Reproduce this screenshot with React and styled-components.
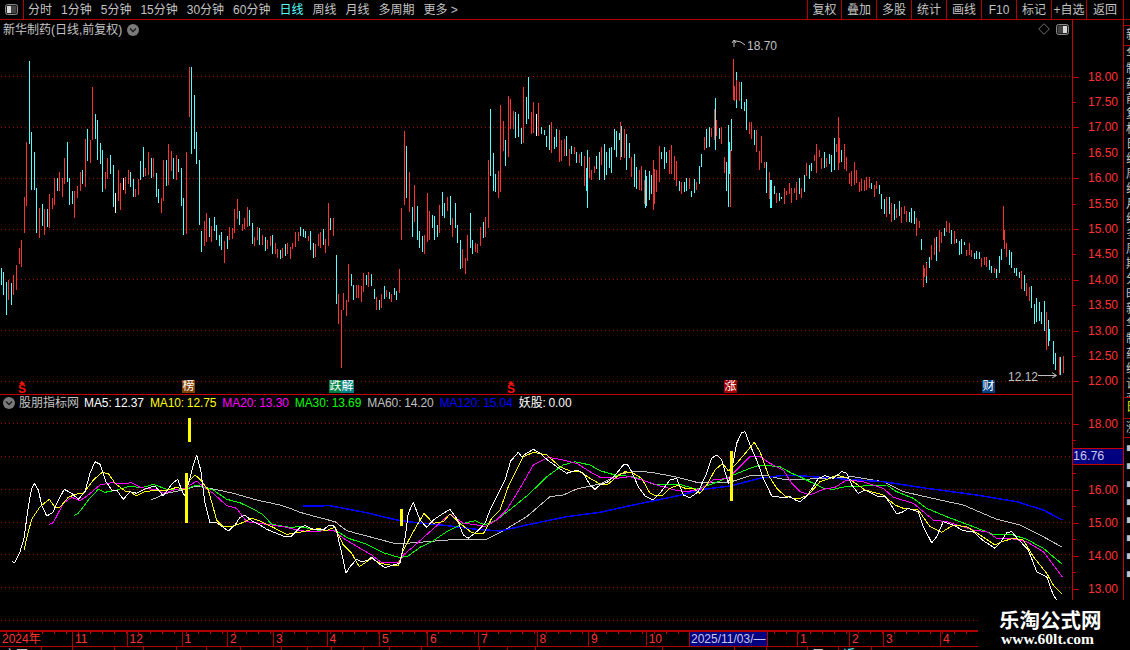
import React from "react";
import styled, { createGlobalStyle } from "styled-components";

const RED = "#b00000";
const TXT = "#c4c4c4";
const AXIS = "#ff3232";
const FONT = `"Liberation Sans", "Noto Sans CJK SC", sans-serif`;

const Global = createGlobalStyle`
  html, body { margin: 0; padding: 0; background: #000; }
  * { box-sizing: border-box; }
`;

const Page = styled.div`
  position: relative; width: 1130px; height: 650px; overflow: hidden;
  background: #000; color: ${TXT}; font: 12px/16px ${FONT};
  display: flex; flex-direction: column;
`;
const Toolbar = styled.header`
  display: flex; height: 20px; flex: none; border-bottom: 1px solid ${RED}; padding-right: 6px;
`;
const PanelBtn = styled.div`
  width: 24px; display: flex; align-items: center; justify-content: center;
  border-right: 1px solid ${RED}; padding-bottom: 1px;
`;
const Tabs = styled.nav`
  flex: 1; display: flex; align-items: center; padding-left: 4px; gap: 9px;
`;
const Tab = styled.span`
  color: ${p => (p.$on ? "#54ffff" : TXT)}; white-space: nowrap;
`;
const ToolBtn = styled.span`
  width: ${p => p.$w}px; display: flex; align-items: center; justify-content: center;
  border-left: 1px solid ${RED}; white-space: nowrap;
  &:last-child { border-right: 1px solid ${RED}; }
`;
const Body = styled.div`
  flex: 1; display: flex; min-height: 0;
`;
const Charts = styled.div`
  width: 1072px; flex: none; display: flex; flex-direction: column;
`;
const Upper = styled.section`
  position: relative; height: 375px; flex: none; border-bottom: 1px solid #c80000;
`;
const Lower = styled.section`
  position: relative; height: 235px; flex: none;
`;
const Plot = styled.svg`
  display: block; position: absolute; inset: 0; font-family: ${FONT};
`;
const Title = styled.div`
  position: absolute; left: 3px; top: 2px; display: flex; align-items: center; gap: 5px; white-space: nowrap;
`;
const Corner = styled.div`
  position: absolute; right: 3px; top: 3px; display: flex; align-items: center; gap: 6px;
`;
const Marker = styled.span`
  position: absolute; left: ${p => p.$x}px; top: 360px; width: ${p => p.$w || 13}px; height: 13px;
  background: ${p => p.$bg}; color: #fff; font-size: 12px; line-height: 13px; text-align: center;
  overflow: hidden;
`;
const Dollar = styled.span`
  position: absolute; left: ${p => p.$x}px; top: 361px; width: 8px; height: 13px; color: #ff1010;
  font: bold 12px/17px ${FONT}; text-align: center;
  &::before { content: ""; position: absolute; left: 1px; top: 0; border: 3px solid transparent;
    border-top: 0; border-bottom: 3px solid #ff1010; }
`;
const Legend = styled.div`
  position: absolute; left: 3px; top: 0; height: 16px; display: flex; align-items: center; white-space: nowrap;
  z-index: 1;
`;
const LegendName = styled.span`
  margin: 0 5px 0 4px; color: ${TXT};
`;
const LegendItem = styled.span`
  color: ${p => p.$c}; margin-right: 6px; letter-spacing: -0.1px; word-spacing: -0.5px;
`;
const TimeAxis = styled.div`
  height: 17px; flex: none; display: flex; color: ${AXIS}; border-top: 2px solid ${RED};
  border-bottom: 1px solid ${RED};
  background: repeating-linear-gradient(90deg, ${RED} 0 1px, transparent 1px 12px) 6px 0 / 100% 2px no-repeat;
`;
const Month = styled.span`
  width: ${p => p.$w}px; flex: none; padding-left: 2px; line-height: 15px; white-space: nowrap;
  border-right: 1px solid ${RED}; overflow: hidden;
`;
const DateBox = styled.span`
  width: ${p => p.$w}px; flex: none; background: #000080; color: #c8c8e8; padding-left: 1px; line-height: 15px;
  white-space: nowrap; border-right: 1px solid ${RED}; overflow: hidden;
`;
const StatusBar = styled.div`
  flex: 1; display: flex; min-height: 0; overflow: hidden;
`;
const StatusCell = styled.span`
  width: ${p => p.$w}px; flex: none; border-right: 1px solid ${RED}; padding: 1px 0 0 4px; font-size: 12px;
  line-height: 14px; color: ${p => p.$c || "#ddd"}; white-space: nowrap; overflow: hidden;
`;
const AxisCol = styled.aside`
  position: relative; width: 52px; flex: none; display: flex; flex-direction: column;
  border-left: 1px solid #c80000; border-right: 1px solid #c80000; color: ${AXIS};
`;
const AxisPane = styled.div`
  height: ${p => p.$h}px; flex: none; padding-top: ${p => p.$pad}px;
  border-bottom: ${p => (p.$line ? "1px solid #c80000" : "none")};
`;
const AxisRow = styled.div`
  position: relative; height: ${p => p.$h}px; display: flex; align-items: center; justify-content: flex-end;
  padding-right: 5px;
  &::before { content: ""; position: absolute; left: 0; top: 50%; height: 1px;
    width: ${p => (p.$major ? 6 : 3)}px; background: ${RED}; }
`;
const ValueTag = styled.div`
  position: absolute; left: 0; right: 0; top: 428px; height: 17px; background: #000080; color: #c8c8e8;
  border-top: 1px solid #c80000; border-bottom: 1px solid #c80000; padding-left: 0; line-height: 15px;
  font-size: 12.5px;
`;
const Strip = styled.aside`
  flex: 1; display: flex; flex-direction: column; min-width: 0; overflow: hidden;
`;
const StripRow = styled.div`
  height: ${p => p.$h}px; flex: none; overflow: hidden; padding: 1px 0 0 2px; color: ${p => p.$c || TXT};
  border-bottom: ${p => (p.$line ? `1px solid ${RED}` : "none")};
`;
const StripText = styled.div`
  width: 12px; word-break: break-all; line-height: ${p => p.$lh || 16}px;
`;
const Watermark = styled.div`
  position: absolute; left: 978px; top: 600px; width: 152px; height: 50px; background: #000; z-index: 3;
  display: flex; flex-direction: column; align-items: flex-start; padding: 7px 0 0 21px;
  color: #fff; font-weight: bold; white-space: nowrap;
`;
const MarkName = styled.div`
  font: bold 20.5px/24px "Noto Sans CJK SC", sans-serif;
`;
const MarkUrl = styled.div`
  font: bold 15.5px/16px "Liberation Serif", serif; margin: 0 0 0 2px;
`;

/* hand-read candles: x, top, bottom, colour */
const r = "#ff3232", c = "#54ffff", w = "#ffffff";
const HAND = [
  [1,268,285,c],[3,272,295,c],[6,282,315,c],[8,280,300,r],[11,283,305,c],[13,275,295,r],[16,265,290,r],[19,248,264,r],[21,240,267,r],
  [24,197,233,r],[26,142,206,r],[29,61,144,c],[31,132,190,c],[34,152,190,c],[36,188,233,c],[39,208,238,r],[42,204,226,c],[44,209,235,r],[47,209,227,c],[49,194,228,r],
  [52,198,209,r],[54,178,205,r],[57,178,191,c],[59,172,191,r],[62,178,197,r],[64,158,184,r],[67,142,182,c],[69,178,205,c],[72,191,204,c],[74,191,218,r],
  [77,186,198,r],[80,172,191,r],[82,170,184,c],[85,139,187,r],[87,129,161,c],[90,140,163,r],[92,87,140,r],[95,114,139,c],[97,120,160,c],[100,143,164,c],
  [102,150,192,c],[105,172,189,r],[107,158,179,r],[110,155,174,c],[113,165,207,c],[115,193,213,w],[118,170,201,r],[120,183,210,r],[123,178,190,w],[125,177,194,r],
  [128,170,184,r],[130,172,187,c],[133,179,197,c],[135,189,197,r],[138,179,195,r],[140,161,180,c],[143,147,177,c],[145,168,176,r],[148,152,175,r],[151,158,178,c],
  [153,158,177,r],[156,173,197,c],[158,189,203,c],[161,198,213,r],[163,160,201,r],[166,160,186,c],[168,144,185,r],[171,151,171,r],[173,158,179,c],[176,155,180,r],
  [178,159,172,c],[181,168,206,c],[183,198,235,c],[186,152,234,r],[189,67,117,r],[191,67,154,c],[194,95,149,c],[196,132,164,c],[199,160,225,c],[201,231,252,c],
  [204,221,246,r],[206,213,242,r],[209,218,237,c],[211,226,242,r],[214,217,231,c],[216,225,240,c],[219,235,246,c],[221,232,250,c],[224,241,263,r],[227,236,249,c],
  [229,227,240,r],[232,228,239,r],[234,209,233,r],[237,199,219,r],[239,211,225,c],[242,224,231,r],[244,218,229,r],[247,207,227,r],[249,210,226,c],[252,223,244,c],
  [254,237,246,r],[257,227,240,r],[259,228,245,c],[262,235,245,r],[265,237,251,c],[267,240,249,r],[270,236,246,r],[272,235,254,c],[275,243,254,r],[277,249,258,r],
  [280,250,259,c],[282,248,258,r],[285,244,256,c],[287,243,254,r],[290,247,259,r],[292,243,249,r],[295,232,247,r],[298,232,241,r],[300,227,236,c],[303,229,237,c],
  [305,231,238,c],[308,236,241,r],[310,231,250,c],[313,243,258,c],[315,244,257,r],[318,234,246,r],[320,232,248,r],[323,229,245,c],[325,239,253,r],[328,203,246,r],
  [330,218,230,c],[333,218,236,r],[336,255,304,c],[338,294,324,r],[341,310,368,r],[343,293,310,r],[346,300,316,r],[348,264,302,r],[351,274,286,c],[353,285,300,c],
  [356,285,298,r],[358,285,298,r],[361,286,302,r],[363,273,292,r],[366,275,285,c],[368,272,287,r],[371,274,286,c],[374,289,299,c],[376,297,310,r],[379,300,310,c],
  [381,294,308,r],[384,286,299,c],[386,290,297,r],[389,292,299,c],[391,294,302,r],[394,288,295,c],[396,291,300,c],[399,269,293,r],[401,208,240,r],[404,131,205,r],
  [406,146,198,c],[409,172,212,r],[412,207,237,c],[414,185,222,r],[417,206,240,c],[419,231,248,c],[422,236,252,c],[424,235,254,r],[427,193,242,r],[429,211,240,r],
  [432,215,228,c],[434,216,240,c],[437,225,237,c],[439,205,233,r],[442,192,216,c],[444,203,218,c],[447,197,211,r],[450,196,225,c],[452,218,237,r],[455,203,228,c],
  [457,225,243,c],[460,240,269,c],[462,249,268,r],[465,258,274,r],[467,235,261,r],[470,213,248,c],[472,240,254,c],[475,243,252,r],[477,244,253,r],[480,227,246,r],
  [483,222,238,c],[485,217,237,r],[488,160,228,r],[490,109,176,c],[493,153,191,c],[495,174,192,c],[498,171,198,r],[500,105,192,r],[503,121,151,r],[505,140,166,c],
  [508,96,157,r],[510,99,129,r],[513,111,129,r],[515,112,138,c],[518,114,137,c],[521,128,144,c],[523,87,143,r],[526,97,124,c],[528,77,119,c],[531,112,134,r],
  [533,102,133,r],[536,114,136,w],[538,103,136,r],
  /* spikes in the later stretch */
  [587,150,208,c],[620,122,160,r],[645,170,208,c],[653,160,210,r],[715,98,150,c],[728,125,207,c],[730,150,207,r],[733,59,100,r],[736,72,108,c],
  [770,180,208,c],[838,117,170,r],[923,265,287,r],[926,262,283,c],[1003,206,240,r],[1048,320,346,c],[1053,341,364,c],[1055,353,370,c],[1059,357,375,r],[1060,357,375,c],[1063,356,373,r],
];
/* envelope of the later candles */
const ENV = [
  [540,115,145],[550,125,160],[560,130,165],[570,140,165],[580,145,170],[587,160,200],[595,145,180],[605,140,185],[618,122,158],
  [627,130,172],[635,160,195],[645,172,208],[652,165,208],[660,140,178],[670,135,172],[680,178,200],[690,180,200],[698,172,195],
  [705,122,155],[715,98,155],[722,125,170],[725,150,205],[729,125,208],[733,75,105],[738,75,108],[745,92,130],[752,115,150],[760,135,175],[768,165,207],
  [775,183,205],[785,184,200],[795,185,207],[805,170,190],[815,132,172],[825,155,172],[838,130,170],[850,160,190],[860,172,190],[875,180,195],
  [885,195,225],[900,204,220],[910,205,225],[920,215,240],[924,262,287],[930,248,270],[937,225,262],[945,215,240],[955,222,250],
  [965,238,255],[975,250,265],[985,256,270],[993,265,283],[1000,255,276],[1003,225,245],[1008,240,265],[1015,260,280],[1025,275,295],
  [1032,285,322],[1040,298,325],[1045,300,345],[1050,330,355],
];
const lerp = (x, i) => {
  for (let k = 1; k < ENV.length; k++) {
    if (x <= ENV[k][0]) {
      const a = ENV[k - 1], b = ENV[k], t = (x - a[0]) / (b[0] - a[0]);
      return a[i] + (b[i] - a[i]) * t;
    }
  }
  return ENV[ENV.length - 1][i];
};
const buildTail = () => {
  const out = [];
  let seed = 7;
  const rnd = () => ((seed = (seed * 1103 + 12345) % 65536) / 65536);
  for (let x = 541; x < 1051; x += 2.5) {
    const top = lerp(x, 1), bot = lerp(x, 2), h = bot - top;
    const shift = (rnd() - 0.5) * 10;
    const a = top + rnd() * h * 0.45 + shift;
    const b = bot - rnd() * h * 0.45 + shift;
    const down = x > 1008 && x < 1050;
    out.push([Math.round(x), Math.round(a), Math.round(b), rnd() < (down ? 0.15 : 0.5) ? r : c]);
  }
  return out;
};
const CANDLES = [...HAND, ...buildTail()];

const Z = (chunks) => chunks.flatMap(([x0, pts]) => pts.map(([x, y]) => `${(x0 + x / 3).toFixed(1)},${(410 + y / 3).toFixed(1)}`)).join(" ");

const MA5 = Z([
  [0,[[35,455],[45,457],[60,425],[72,385],[85,290],[95,235],[103,220],[115,240],[125,285],[140,318],[158,308],[175,270],[193,238],[215,250],[235,268],[255,245],[270,190],[285,155],[300,163],[318,215],[335,240],[350,240],[370,268],[390,245],[410,250],[440,235],[465,228],[490,258],[515,222],[533,208],[545,240],[553,258],[570,205],[580,165],[590,135],[602,180],[615,280],[630,338],[650,338],[685,363],[705,345],[720,322],[735,316],[755,332],[780,345],[800,358],[825,368],[850,378],[875,378]]],
  [300,[[0,352],[15,347],[40,358],[70,360],[85,347],[100,345],[110,365],[125,430],[138,490],[150,470],[170,448],[185,455],[200,452],[215,442],[235,460],[255,473],[280,465],[300,460],[315,385],[325,310],[340,277],[360,330],[380,352],[400,330],[430,310],[450,298],[470,325],[490,375],[505,385],[530,365],[555,340],[570,300],[590,260],[615,210],[632,153],[655,127],[665,140],[680,130],[700,118],[720,130],[740,148],[770,170],[800,190],[830,180],[850,190],[870,225],[885,238]]],
  [600,[[0,225],[25,215],[50,190],[70,165],[82,163],[95,185],[115,230],[135,258],[160,270],[180,250],[210,210],[230,205],[250,255],[270,263],[295,245],[320,190],[335,145],[350,135],[365,150],[385,220],[395,180],[410,100],[425,68],[435,65],[450,105],[470,150],[490,205],[515,258],[550,263],[570,260],[590,272]]],
  [800,[[0,275],[20,258],[40,230],[55,205],[75,197],[100,205],[125,185],[140,190],[155,225],[175,250],[195,240],[230,258],[255,258],[270,280],[290,312],[310,305],[325,295],[355,305],[370,350],[395,398],[410,380],[430,335],[460,345],[490,362],[520,365],[550,392],[585,415],[600,400],[620,368],[635,365],[655,388],[685,420],[710,485],[740,500],[760,555],[770,570]]],
]);
const MA10 = Z([
  [0,[[72,420],[85,365],[95,328],[120,290],[148,268],[165,292],[180,292],[205,262],[230,252],[250,250],[280,210],[305,188],[325,190],[345,220],[375,243],[390,243],[408,258],[435,245],[470,240],[495,243],[530,232],[555,240],[570,210],[585,195],[600,208],[625,240],[650,330],[670,350],[695,350],[735,335],[755,325],[785,335],[825,355],[860,373]]],
  [300,[[0,367],[30,360],[60,355],[75,363],[105,352],[130,405],[155,430],[178,470],[200,455],[215,445],[240,460],[270,465],[295,468],[310,420],[340,365],[372,310],[400,340],[430,335],[450,312],[480,340],[515,368],[550,372],[575,325],[600,300],[625,230],[650,178],[670,140],[700,127],[740,135],[780,170],[810,183],[840,185],[870,205]]],
  [600,[[0,222],[25,222],[50,200],[75,185],[100,190],[125,205],[150,250],[170,258],[190,255],[210,235],[235,225],[255,235],[280,235],[300,250],[320,225],[345,180],[368,160],[385,183],[410,160],[440,125],[463,97],[480,125],[505,195],[530,235],[555,258],[580,265]]],
  [800,[[0,265],[25,255],[60,215],[90,205],[110,195],[145,205],[195,240],[250,255],[285,285],[310,295],[355,300],[390,350],[425,367],[460,345],[500,350],[540,375],[585,405],[605,395],[640,385],[670,390],[700,440],[740,490],[760,525],[787,553]]],
]);
const MA20 = Z([
  [0,[[148,343],[160,338],[190,280],[215,262],[240,272],[265,255],[300,225],[335,218],[365,222],[395,218],[420,232],[470,240],[490,250],[530,238],[555,235],[590,213],[610,230],[640,250],[680,287],[710,295],[740,335],[800,343],[850,350]]],
  [300,[[0,362],[40,365],[100,360],[130,385],[175,412],[215,435],[245,458],[295,458],[310,435],[340,410],[390,365],[450,312],[490,340],[520,343],[555,350],[590,330],[620,300],[660,235],[700,165],[745,142],[780,148],[830,160],[870,185]]],
  [600,[[0,202],[50,205],[90,200],[125,210],[170,225],[225,240],[260,245],[300,238],[340,210],[385,205],[405,185],[450,140],[480,140],[510,160],[550,180],[575,220]]],
  [800,[[0,245],[30,255],[70,238],[105,232],[140,210],[190,215],[250,235],[280,262],[340,280],[400,330],[440,335],[520,360],[560,365],[590,385],[640,387],[680,395],[730,425],[760,465],[787,500]]],
]);
const MA30 = Z([
  [0,[[222,316],[235,310],[265,270],[295,238],[315,247],[350,240],[385,230],[430,232],[460,223],[500,238],[550,240],[590,225],[640,240],[680,268],[720,278],[770,303],[790,315],[815,343],[870,352]]],
  [300,[[0,350],[50,360],[105,360],[145,385],[200,403],[250,428],[300,443],[325,438],[360,412],[395,395],[440,365],[490,340],[525,332],[555,345],[590,330],[650,283],[690,250],[740,200],[790,165],[825,155],[870,165]]],
  [600,[[0,182],[45,195],[100,200],[160,222],[235,222],[290,238],[355,215],[400,195],[450,175],[480,165],[540,170],[575,190]]],
  [800,[[0,200],[30,215],[70,235],[100,238],[135,230],[190,228],[260,225],[290,245],[340,265],[380,295],[440,320],[520,350],[585,375],[630,372],[680,388],[730,415],[787,463]]],
]);
const MA60 = Z([
  [0,[[453,270],[500,250],[550,240],[590,228],[640,237],[700,250],[770,270],[840,285],[870,295]]],
  [300,[[0,307],[40,318],[105,335],[140,362],[200,378],[290,402],[380,395],[480,387],[560,387],[600,368],[680,320],[750,260],[790,255],[830,237]]],
  [600,[[0,222],[60,192],[110,183],[160,188],[225,200],[290,217],[385,218],[450,197],[500,197],[550,208]]],
  [800,[[0,208],[100,205],[160,200],[250,215],[310,245],[420,270],[490,285],[590,328],[660,345],[730,380],[787,412]]],
]);
const MA120 = Z([
  [300,[[10,288],[90,287],[200,308],[290,330],[340,337],[450,348],[530,358],[600,363],[680,345],[800,320]]],
  [600,[[0,307],[100,285],[230,258],[310,238],[390,228],[480,205],[540,197]]],
  [800,[[0,197],[100,205],[250,215],[380,235],[530,255],[650,275],[730,300],[787,330]]],
]);
const LINES = [
  [MA60, "#c0c0c0", 1], [MA120, "#0000ff", 1.5], [MA30, "#00ff00", 1], [MA20, "#ff00ff", 1], [MA10, "#ffff00", 1], [MA5, "#ffffff", 1],
];
const BARS = [[188, 418, 442], [185, 473, 523], [400, 509, 526], [730, 451, 501]];
const GRID_U = [76, 127, 178, 229, 279, 330, 381];
const GRID_L = [423, 456, 489, 522, 554, 587, 620];

const Dots = ({ ys }) => ys.map(y => (
  <line key={y} x1="1" x2="1072" y1={y + 0.5} y2={y + 0.5} stroke="#a00000" strokeDasharray="1 3" />
));

const Chevron = () => (
  <svg width="12" height="12" viewBox="0 0 12 12">
    <circle cx="6" cy="6" r="6" fill="#7a7a7a" />
    <path d="M3 4.5 L6 7.5 L9 4.5" fill="none" stroke="#1c1c1c" strokeWidth="1.4" />
  </svg>
);
const PanelIcon = ({ side }) => (
  <svg width="13" height="11" viewBox="0 0 13 11">
    <rect x="0.5" y="0.5" width="12" height="10" rx="2" fill="#222" stroke="#8a8a8a" />
    <rect x={side === "left" ? 2 : 7} y="2" width="4" height="7" fill="#d8d8d8" />
    <rect x={side === "left" ? 6 : 2} y="2" width="5" height="7" fill="#444" />
  </svg>
);
const Diamond = () => (
  <svg width="12" height="12" viewBox="0 0 12 12">
    <path d="M6 .7 L11.3 6 L6 11.3 L.7 6 Z" fill="none" stroke="#707070" />
  </svg>
);

const TABS = ["分时", "1分钟", "5分钟", "15分钟", "30分钟", "60分钟", "日线", "周线", "月线", "多周期"];
const BTNS = [["复权", 34], ["叠加", 35], ["多股", 35], ["统计", 35], ["画线", 35], ["F10", 35], ["标记", 35], ["+自选", 35], ["返回", 38]];
const U_LABELS = ["18.00", "17.50", "17.00", "16.50", "16.00", "15.50", "15.00", "14.50", "14.00", "13.50", "13.00", "12.50", "12.00"];
const L_LABELS = ["18.00", "", "", "", "16.00", "", "15.00", "", "14.00", "", "13.00", "", ""];
const LEGEND = [["MA5: 12.37", "#fff"], ["MA10: 12.75", "#ff0"], ["MA20: 13.30", "#f0f"], ["MA30: 13.69", "#0f0"], ["MA60: 14.20", "#c0c0c0"], ["MA120: 15.04", "#0000ff"], ["妖股: 0.00", "#fff"]];
const MONTHS = [["2024年", 73], ["11", 54.5], ["12", 55], ["1", 45.5], ["2", 46], ["3", 53.5], ["4", 52.5], ["5", 48], ["6", 51], ["7", 58.5], ["8", 51.5], ["9", 57.7], ["10", 43.3]];
const MONTHS2 = [["", 30], ["1", 52], ["2", 34], ["3", 57], ["4", 94]];
const CELLS = [[42, "主图"], [31], [42], [29], [33], [30], [34], [41], [26], [24], [32], [26], [32], [58], [28], [28], [127], [72], [32], [41, "", "#ddd"], [31, "周"], [33, "近", "#54ffff"], [258]];

export default function App() {
  return (
    <Page>
      <Global />
      <Toolbar>
        <PanelBtn><PanelIcon side="left" /></PanelBtn>
        <Tabs>
          {TABS.map(t => <Tab key={t} $on={t === "日线"}>{t}</Tab>)}
          <Tab>更多 &gt;</Tab>
        </Tabs>
        {BTNS.map(([t, w]) => <ToolBtn key={t} $w={w}>{t}</ToolBtn>)}
      </Toolbar>
      <Body>
        <Charts>
          <Upper>
            <Plot width="1072" height="374" viewBox="0 20 1072 374">
              <Dots ys={GRID_U} />
              <g shapeRendering="crispEdges">
                {CANDLES.map(([x, a, b, col], i) => (
                  <line key={i} x1={x + 0.5} x2={x + 0.5} y1={a} y2={b} stroke={col} />
                ))}
              </g>
              <path d="M734 47 V41 H736 Q741 41 745 45 M732 43 L734 40 L736 43" fill="none" stroke="#c0c0c0" />
              <text x="747" y="50" fill="#c0c0c0" fontSize="12">18.70</text>
              <text x="1008" y="381" fill="#c0c0c0" fontSize="12">12.12</text>
              <path d="M1038 375.5 H1056 M1052 372.5 L1056.5 375.5 L1052 378" fill="none" stroke="#c0c0c0" />
            </Plot>
            <Title>新华制药(日线,前复权) <Chevron /></Title>
            <Corner><Diamond /><PanelIcon side="right" /></Corner>
            <Dollar $x={18}>S</Dollar>
            <Marker $x={182} $bg="#804000">榜</Marker>
            <Marker $x={329} $bg="#008040">跌</Marker>
            <Marker $x={341} $bg="#008080">解</Marker>
            <Dollar $x={507}>S</Dollar>
            <Marker $x={724} $bg="#a00000">涨</Marker>
            <Marker $x={982} $bg="#004080">财</Marker>
          </Upper>
          <Lower>
            <Plot width="1072" height="235" viewBox="0 395 1072 235">
              <Dots ys={GRID_L} />
              <g shapeRendering="crispEdges" fill="none">
                {LINES.map(([pts, col, sw]) => (
                  <polyline key={col} points={pts} stroke={col} strokeWidth={sw} strokeLinejoin="round" />
                ))}
              </g>
              <g shapeRendering="crispEdges" fill="#ffff00">
                {BARS.map(([x, a, b]) => <rect key={a} x={x} y={a} width="3" height={b - a} />)}
              </g>
            </Plot>
            <Legend>
              <Chevron />
              <LegendName>股朋指标网</LegendName>
              {LEGEND.map(([t, col]) => <LegendItem key={t} $c={col}>{t}</LegendItem>)}
            </Legend>
          </Lower>
          <TimeAxis>
            {MONTHS.map(([t, w], i) => <Month key={i} $w={w}>{t}</Month>)}
            <DateBox $w={78}>2025/11/03/—</DateBox>
            {MONTHS2.map(([t, w], i) => <Month key={i} $w={w}>{t}</Month>)}
          </TimeAxis>
          <StatusBar>
            {CELLS.map(([w, t, col], i) => <StatusCell key={i} $w={w} $c={col}>{t}</StatusCell>)}
          </StatusBar>
        </Charts>
        <AxisCol>
          <AxisPane $h={375} $pad={44}>
            {U_LABELS.map(t => <AxisRow key={t} $h={25.4} $major={t.endsWith("00")}>{t}</AxisRow>)}
          </AxisPane>
          <AxisPane $h={235} $pad={20.5}>
            {L_LABELS.map((t, i) => <AxisRow key={i} $h={16.5} $major={!!t}>{t}</AxisRow>)}
          </AxisPane>
          <ValueTag>16.76</ValueTag>
        </AxisCol>
        <Strip>
          <StripRow $h={6} $line />
          <StripRow $h={20} $line><StripText>新</StripText></StripRow>
          <StripRow $h={352} $line>
            <StripText $lh={15}>华制药前复权日线周线月线多周期分时新华制药统计画线标记自选返回叠加多股</StripText>
          </StripRow>
          <StripRow $h={21} $line $c="#e0e000"><StripText>日</StripText></StripRow>
          <StripRow $h={19} $line><StripText>涨</StripText></StripRow>
          <StripRow $h={212}><StripText $lh={18}>■■■■■■■■</StripText></StripRow>
        </Strip>
      </Body>
      <Watermark>
        <MarkName>乐淘公式网</MarkName>
        <MarkUrl>www.60lt.com</MarkUrl>
      </Watermark>
    </Page>
  );
}
